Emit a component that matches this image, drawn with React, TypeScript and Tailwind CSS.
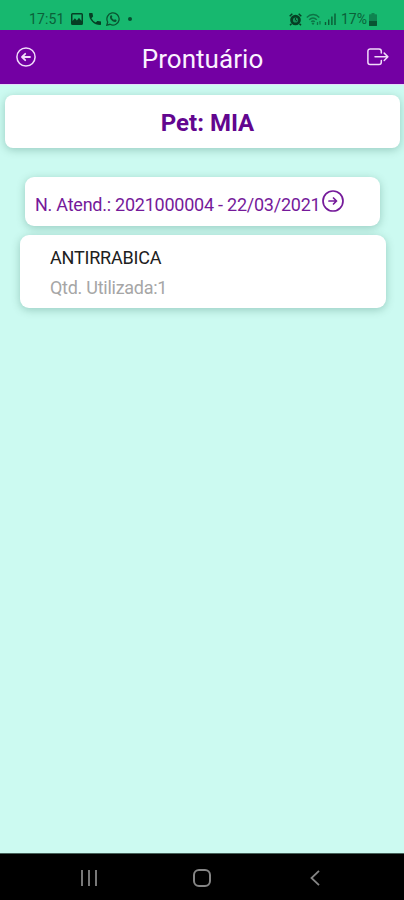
import React from "react";

function StatusBar() {
  return (
    <div className="flex h-[30px] shrink-0 items-start justify-between bg-[#17b86f] pl-[29px] pr-[27px] pt-[11px] text-[#0b6039]">
      <div className="flex h-4 items-center">
        <span className="w-[35px] whitespace-nowrap text-[14px] leading-4 tracking-[0.1px]">17:51</span>
        <svg className="ml-[7px] h-[12px] w-[12px] text-[#063f24]" viewBox="0 0 12 12">
          <path fillRule="evenodd" fill="currentColor" d="M1.5 0h9A1.5 1.5 0 0 1 12 1.5v9a1.5 1.5 0 0 1-1.5 1.5h-9A1.5 1.5 0 0 1 0 10.500v-9A1.500 1.500 0 0 1 1.500 0zM1.500 1.500V8l2.400-2.700 2 2.200L8 4.700l2.500 3.300V1.500z" />
        </svg>
        <svg className="ml-[6px] h-[12px] w-[12px] text-[#063f24]" viewBox="3 3 18 18">
          <path fill="currentColor" d="M6.540 3H4a1 1 0 0 0-1 1c0 9.390 7.610 17 17 17a1 1 0 0 0 1-1v-3.500a1 1 0 0 0-1-1c-1.250 0-2.450-.2-3.570-.57a1 1 0 0 0-1.020.24l-2.200 2.200a15.100 15.100 0 0 1-6.590-6.590l2.200-2.200a1 1 0 0 0 .25-1.010A11.400 11.400 0 0 1 8.500 4a1 1 0 0 0-1-1z" />
        </svg>
        <svg className="ml-[5px] h-[14px] w-[14px]" viewBox="0 0 14 14" fill="none" stroke="#0a5431">
          <path strokeWidth="1.300" d="M.8 13.200l.9-3.200a6.100 6.100 0 1 1 2.300 2.300z" />
          <path fill="#0a5431" stroke="none" d="M4.600 3.500c.5-.5 1-.4 1.200.1l.5 1.200c.1.300-.5.800-.5 1 .5 1 1.300 1.700 2.300 2.200.3 0 .7-.7 1-.7l1.300.7c.4.200.2 1-.2 1.400-1.400 1.200-3.300.2-4.600-1.100C4.200 7 3.200 4.900 4.600 3.500z" />
        </svg>
        <span className="ml-[8px] h-[4px] w-[4px] rounded-full bg-[#075030]" />
      </div>
      <div className="flex h-4 items-center">
        <svg className="h-[13px] w-[13px]" viewBox="0 0 13 13" fill="none">
          <path stroke="#063f24" strokeWidth="1.500" d="M.7 3.200 3.300.8M9.700.8l2.600 2.400M2.500 10.800 1 12.300M10.500 10.800l1.500 1.500" />
          <circle cx="6.500" cy="7" r="5.300" fill="#063f24" />
          <circle cx="6.500" cy="7" r="2.600" fill="#14945a" />
          <path d="M6.500 4.800V7l1.600 1" stroke="#063f24" />
        </svg>
        <svg className="ml-[4px] h-[13px] w-[16px]" viewBox="0 0 16 13" fill="none" stroke="#0d7446" strokeWidth="1.300">
          <path d="M.8 4.500C4.500.5 9.800.5 13.300 4.500M3.200 6.700c2.300-2.300 5.300-2.300 7.600 0M5.200 8.800c1.200-1.100 2.400-1.100 3.600 0" />
          <path d="m6 10 1 1 1-1M11.500 9v3M14 8v3.500" />
        </svg>
        <svg className="ml-[2px] h-[12px] w-[12px]" viewBox="0 0 12 12" stroke="#0b5a35" strokeWidth="1.400">
          <path d="M1.500 12V9M4.700 12V6.500M7.900 12V3.500M11 12V.5" />
        </svg>
        <span className="ml-[5px] w-[28px] whitespace-nowrap text-[14px] leading-4">17%</span>
        <svg className="h-[13px] w-[8px]" viewBox="0 0 8 13">
          <path d="M2.500 0h3v1.300H7c.6 0 1 .4 1 1V12c0 .6-.4 1-1 1H1c-.6 0-1-.4-1-1V2.300c0-.6.4-1 1-1h1.500z" fill="#0f8350" />
          <path d="M0 8h8v4c0 .6-.4 1-1 1H1c-.6 0-1-.4-1-1z" fill="#095532" />
        </svg>
      </div>
    </div>
  );
}

function Header() {
  return (
    <header className="flex h-[55px] shrink-0 items-center justify-between border-b border-[#e3dcfa] bg-[#7300a3] pl-4 pr-[15px] text-[#f1dcfa]">
      <svg className="h-5 w-5" viewBox="0 0 20 20" fill="none" stroke="currentColor" strokeWidth="1.500" strokeLinecap="round" strokeLinejoin="round">
        <circle cx="10" cy="10" r="9.100" />
        <path strokeWidth="1.800" d="M14 10H6.200M9.200 6.800 6 10l3.200 3.200" />
      </svg>
      <h1 className="pl-[2px] pt-[3px] text-[26px] leading-[30px] tracking-[0.05px] text-[#fbf2ff]">Prontuário</h1>
      <svg className="h-[18px] w-[22px]" viewBox="0 0 22 18" fill="none" stroke="currentColor" strokeWidth="1.500" strokeLinecap="round" strokeLinejoin="round">
        <path d="M14.300 5V3.200A2.300 2.300 0 0 0 12 .9H3.200A2.300 2.300 0 0 0 .9 3.200v11.100a2.300 2.300 0 0 0 2.300 2.300H12a2.300 2.300 0 0 0 2.300-2.300v-1.800M8 8.800h12.800M17.200 5.100l3.700 3.700-3.700 3.700" />
      </svg>
    </header>
  );
}

function NavigationBar() {
  return (
    <nav className="flex h-[47px] shrink-0 items-center border-t border-[#466159] bg-black pl-[81px] pt-[2px] text-[#858585]">
      <svg className="h-4 w-4" viewBox="0 0 16 16" stroke="currentColor" strokeWidth="1.800">
        <path d="M1 0v16M8 0v16M15 0v16" />
      </svg>
      <span className="ml-[96px] h-[18px] w-[18px] rounded-[6px] border-2 border-current" />
      <svg className="ml-[99px] h-4 w-[10px]" viewBox="0 0 10 16" fill="none" stroke="currentColor" strokeWidth="1.800">
        <path d="M9 .8 1.500 8 9 15.200" />
      </svg>
    </nav>
  );
}

export default function App() {
  return (
    <div className="flex h-[900px] w-[404px] flex-col overflow-hidden bg-[#ccfaf1] font-[Roboto,sans-serif]">
      <StatusBar />
      <Header />
      <main className="flex-1">
        <section className="ml-[5px] mt-[10px] flex h-[53px] w-[395px] items-center justify-center rounded-[8px] bg-white pl-[10px] pt-[2px] shadow-[0_2px_8px_rgba(0,70,50,0.25)]">
          <h2 className="whitespace-nowrap text-[24px] font-bold leading-7 text-[#62068f]">Pet: MIA</h2>
        </section>
        <button className="ml-[25px] mt-[29px] flex h-[49px] w-[355px] items-center rounded-[9px] bg-white pl-[10px] text-[#751a9a] shadow-[0_2px_8px_rgba(0,70,50,0.25)]">
          <span className="w-[287px] whitespace-nowrap pt-[7px] text-left text-[18px] leading-5 tracking-[-0.24px]">N. Atend.: 2021000004 - 22/03/2021</span>
          <svg className="mb-[2px] h-[22px] w-[22px] shrink-0" viewBox="0 0 22 22" fill="none" stroke="currentColor" strokeWidth="1.700" strokeLinecap="round" strokeLinejoin="round">
            <circle cx="11" cy="11" r="10" />
            <path d="M7 11h7.500M11.500 8l3 3-3 3" />
          </svg>
        </button>
        <section className="ml-5 mt-[9px] flex h-[73px] w-[366px] flex-col rounded-[9px] bg-white pl-[30px] pt-[13px] shadow-[0_2px_8px_rgba(0,70,50,0.25)]">
          <span className="whitespace-nowrap text-[18px] leading-5 tracking-[-0.2px] text-[#202020]">ANTIRRABICA</span>
          <span className="mt-[10px] whitespace-nowrap text-[18px] leading-5 tracking-[-0.27px] text-[#a6a6a6]">Qtd. Utilizada:1</span>
        </section>
      </main>
      <NavigationBar />
    </div>
  );
}
